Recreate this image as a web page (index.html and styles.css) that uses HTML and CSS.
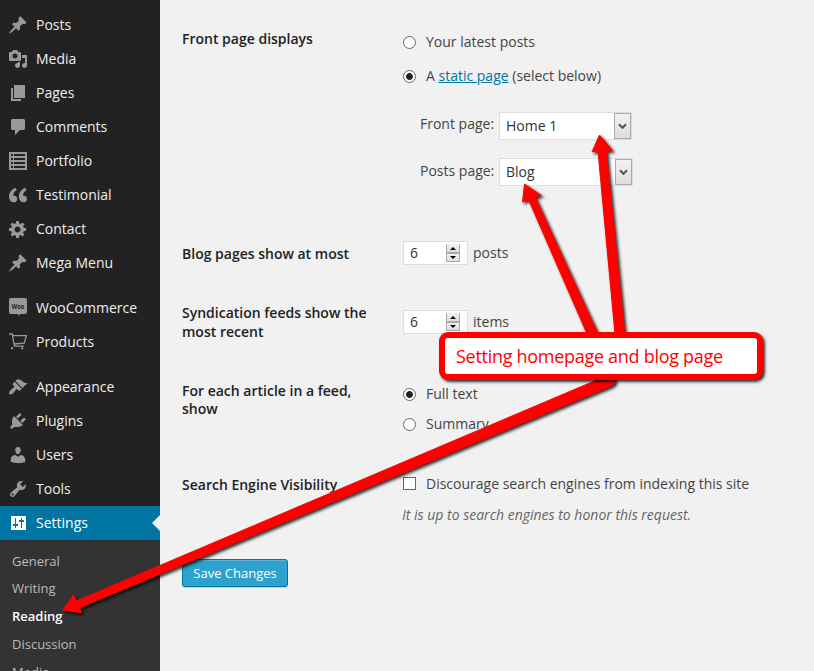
FILE: index.html
```html
<!DOCTYPE html>
<html lang="en">
<head>
<meta charset="utf-8">
<title>Reading Settings</title>
<link rel="stylesheet" href="styles.css">
</head>
<body>
<div class="app">
  <nav class="sidebar">
    <ul class="menu">
      <li class="item"><svg class="icon" viewBox="0 0 20 20"><path d="M10.44 3.02l1.82-1.82 6.36 6.35-1.83 1.82c-1.05-.68-2.48-.57-3.41.36l-.75.75c-.92.93-1.04 2.35-.35 3.41l-1.83 1.82-2.41-2.41-2.8 2.79c-.42.42-3.38 2.71-3.8 2.29s1.86-3.39 2.28-3.81l2.79-2.79L4.1 9.36l1.83-1.82c1.05.69 2.48.57 3.4-.36l.75-.75c.93-.92 1.05-2.35.36-3.41z"/></svg>Posts</li>
      <li class="item"><svg class="icon" viewBox="0 0 20 20"><path d="M13 11V4c0-.55-.45-1-1-1h-1.67L9 1H5L3.67 3H2c-.55 0-1 .45-1 1v7c0 .55.45 1 1 1h10c.55 0 1-.45 1-1zM7 4.5c1.38 0 2.5 1.12 2.5 2.5S8.38 9.5 7 9.5 4.5 8.38 4.5 7 5.62 4.5 7 4.5zM14 6h5v10.5c0 1.38-1.12 2.5-2.5 2.5S14 17.88 14 16.5s1.12-2.5 2.5-2.5c.17 0 .34.02.5.05V9h-3V6zm-4 8.05V13h2v3.5c0 1.38-1.12 2.5-2.5 2.5S7 17.88 7 16.5 8.12 14 9.5 14c.17 0 .34.02.5.05z"/></svg>Media</li>
      <li class="item"><svg class="icon" viewBox="0 0 20 20"><path d="M6 15V2h11v13H6zm-1 1h8v2H3V5h2v11z"/></svg>Pages</li>
      <li class="item"><svg class="icon" viewBox="0 0 20 20"><path d="M4.500 2h11c.8 0 1.500.7 1.500 1.500v8c0 .8-.7 1.500-1.500 1.500H12l-5 5v-5H4.500C3.700 13 3 12.300 3 11.500v-8C3 2.700 3.700 2 4.500 2z"/></svg>Comments</li>
      <li class="item"><svg class="icon" viewBox="0 0 20 20"><path fill-rule="evenodd" d="M1 1h18v18H1zM3 3v2h2V3zM6 3v2h11V3zM3 7v2h2V7zM6 7v2h11V7zM3 11v2h2v-2zM6 11v2h11v-2zM3 15v2h2v-2zM6 15v2h11v-2z"/></svg>Portfolio</li>
      <li class="item"><svg class="icon quote" viewBox="2 3 16.400 14"><path d="M9.490 13.220c0-.74-.2-1.380-.61-1.900-.62-.78-1.830-.88-2.530-.72-.29-1.650 1.110-3.750 2.920-4.650L7.880 4c-2.730 1.300-5.420 4.280-4.960 8.050C3.210 14.430 4.590 16 6.540 16c.85 0 1.560-.25 2.120-.75s.83-1.180.83-2.030zm8.050 0c0-.74-.2-1.380-.61-1.900-.63-.78-1.830-.88-2.530-.72-.29-1.650 1.110-3.750 2.920-4.650L15.930 4c-2.730 1.300-5.410 4.280-4.950 8.050.29 2.380 1.660 3.950 3.610 3.950.85 0 1.560-.25 2.120-.75s.83-1.180.83-2.030z"/></svg>Testimonial</li>
      <li class="item"><svg class="icon" viewBox="0 0 20 20"><path d="M18 12h-2.180c-.17.7-.44 1.350-.81 1.930l1.540 1.540-2.100 2.100-1.540-1.540c-.58.36-1.230.63-1.910.79V19H8v-2.180c-.68-.16-1.330-.43-1.910-.79l-1.540 1.540-2.120-2.120 1.540-1.540c-.36-.58-.63-1.230-.79-1.910H1V9.030h2.170c.16-.7.44-1.350.8-1.940L2.430 5.550l2.100-2.100 1.540 1.540c.58-.37 1.240-.64 1.930-.81V2h3v2.180c.68.160 1.330.43 1.910.79l1.540-1.540 2.120 2.120-1.540 1.540c.36.59.64 1.240.8 1.940H18V12zm-8.500 1.500c1.660 0 3-1.340 3-3s-1.340-3-3-3-3 1.340-3 3 1.340 3 3 3z"/></svg>Contact</li>
      <li class="item"><svg class="icon" viewBox="0 0 20 20"><path d="M10.44 3.02l1.82-1.82 6.36 6.35-1.83 1.82c-1.05-.68-2.48-.57-3.41.36l-.75.75c-.92.93-1.04 2.35-.35 3.41l-1.83 1.82-2.41-2.41-2.8 2.79c-.42.42-3.38 2.71-3.8 2.29s1.86-3.39 2.28-3.81l2.79-2.79L4.1 9.36l1.83-1.82c1.05.69 2.48.57 3.4-.36l.75-.75c.93-.92 1.05-2.35.36-3.41z"/></svg>Mega Menu</li>
    </ul>
    <ul class="menu">
      <li class="item"><svg class="icon" viewBox="0 0 20 20"><path d="M3 0h14a2 2 0 0 1 2 2v12a2 2 0 0 1-2 2h-5l-.7 1.700L9.500 16H3a2 2 0 0 1-2-2V2a2 2 0 0 1 2-2z"/><text class="woo" x="10" y="10.500" text-anchor="middle" textLength="13" lengthAdjust="spacingAndGlyphs">Woo</text></svg>WooCommerce</li>
      <li class="item"><svg class="icon line" viewBox="0 0 20 20"><path d="M1 2h3.200l2.300 12.500M4.700 3.600h13.700l-2.200 7.600L6.200 12M6.400 14.200h9.800"/><path class="solid" d="M3 15.300h2v2H3zM13.200 15.300h2v2h-2z"/></svg>Products</li>
    </ul>
    <ul class="menu">
      <li class="item"><svg class="icon" viewBox="0 0 20 20"><path d="M14.480 11.060L7.410 3.990l1.500-1.500c.5-.56 2.300-.47 3.510.32 1.210.8 1.430 1.280 2.910 2.100 1.180.64 2.450 1.260 4.450.85zm-.71.71L6.700 4.700 4.930 6.470c-.39.39-.39 1.020 0 1.410l1.060 1.060c.39.39.39 1.030 0 1.420-.6.6-1.430 1.110-2.210 1.690-.35.26-.7.53-1.010.84C1.430 14.230.4 16.080 1.400 17.070c.99 1 2.840-.03 4.180-1.360.31-.31.58-.66.85-1.020.57-.78 1.080-1.610 1.690-2.210.39-.39 1.020-.39 1.410 0l1.060 1.060c.39.39 1.020.39 1.410 0z"/></svg>Appearance</li>
      <li class="item"><svg class="icon" viewBox="0 0 20 20"><path d="M13.110 4.360L9.870 7.600 8 5.730l3.240-3.240c.35-.34 1.050-.2 1.560.32.52.51.66 1.210.31 1.550zm-8 1.770l.91-1.120 9.010 9.010-1.190.84c-.71.71-2.630 1.160-3.820 1.160H6.140L4.900 17.260c-.59.59-1.540.59-2.120 0-.59-.58-.59-1.530 0-2.120l1.240-1.240v-3.880c0-1.130.4-3.190 1.090-3.890zm7.260 3.970l3.240-3.240c.34-.35 1.040-.21 1.550.31.52.51.66 1.210.31 1.550l-3.240 3.250z"/></svg>Plugins</li>
      <li class="item"><svg class="icon" viewBox="0 0 20 20"><path d="M10 9.250c-2.270 0-2.730-3.440-2.730-3.440C7 4.020 7.820 2 9.970 2c2.160 0 2.980 2.020 2.710 3.810 0 0-.41 3.440-2.680 3.440zm0 2.570L12.720 10c2.390 0 4.520 2.330 4.520 4.530v2.490s-3.650 1.130-7.240 1.130c-3.650 0-7.240-1.130-7.240-1.130v-2.490c0-2.250 1.940-4.480 4.470-4.480z"/></svg>Users</li>
      <li class="item"><svg class="icon" viewBox="0 0 20 20"><path d="M16.680 9.770c-1.340 1.340-3.300 1.670-4.950.99l-5.410 6.520c-.99.99-2.590.99-3.580 0s-.99-2.590 0-3.570l6.520-5.420c-.68-1.650-.35-3.610.99-4.950 1.280-1.280 3.120-1.620 4.720-1.060l-2.890 2.890 2.820 2.820 2.860-2.870c.53 1.580.18 3.390-1.080 4.650zM3.810 16.210c.4.39 1.040.39 1.430 0 .4-.4.4-1.040 0-1.430-.39-.4-1.030-.4-1.430 0-.39.39-.39 1.030 0 1.430z"/></svg>Tools</li>
      <li class="item current"><svg class="icon" viewBox="0 0 20 20"><path fill-rule="evenodd" d="M3 3h15v14H3zM7 5v6H5v2h2v2h1v-2h2v-2H8V5zM13 5v2h-2v2h2v6h1V9h2V7h-2V5z"/></svg>Settings</li>
    </ul>
    <ul class="submenu">
      <li>General</li>
      <li>Writing</li>
      <li class="active">Reading</li>
      <li>Discussion</li>
      <li>Media</li>
    </ul>
  </nav>

  <main class="content">
    <section class="row front">
      <h2>Front page displays</h2>
      <div class="controls">
        <div class="option"><span class="radio"></span>Your latest posts</div>
        <div class="option"><span class="radio checked"></span><span>A <a href="#">static page</a> (select below)</span></div>
        <div class="picker"><span class="picker-label">Front page:</span><span class="select">Home 1<span class="drop"><svg viewBox="0 0 9 7"><path d="M1 1.200l3.500 3.600L8 1.200"/></svg></span></span></div>
        <div class="picker"><span class="picker-label">Posts page:</span><span class="select wide">Blog<span class="drop"><svg viewBox="0 0 9 7"><path d="M1 1.200l3.500 3.600L8 1.200"/></svg></span></span></div>
      </div>
    </section>
    <section class="row blog">
      <h2>Blog pages show at most</h2>
      <div class="controls count"><span class="number">6<span class="spin"><i class="up"></i><i class="down"></i></span></span>posts</div>
    </section>
    <section class="row feeds">
      <h2>Syndication feeds show the most recent</h2>
      <div class="controls count"><span class="number">6<span class="spin"><i class="up"></i><i class="down"></i></span></span>items</div>
    </section>
    <section class="row article">
      <h2>For each article in a feed, show</h2>
      <div class="controls">
        <div class="option"><span class="radio checked"></span>Full text</div>
        <div class="option"><span class="radio"></span>Summary</div>
      </div>
    </section>
    <section class="row search">
      <h2>Search Engine Visibility</h2>
      <div class="controls">
        <div class="option"><span class="checkbox"></span>Discourage search engines from indexing this site</div>
        <p class="note">It is up to search engines to honor this request.</p>
      </div>
    </section>
    <button class="save" type="button">Save Changes</button>
  </main>

  <svg class="arrows" viewBox="0 0 814 671">
    <path d="M524.500 184l17 11.500-6.500 1.200L599 336h-11L528.500 199.500l-6 2.500z"/>
    <path d="M599.500 135l13 15.500-6.300.2L625 336h-9.800L598 151.200l-6 .6z"/>
    <path d="M62.700 610L73.500 595l2.700 6L598 379.500l17-1v4q-1 2-4 3.500L79.500 607.800l2.200 5z"/>
  </svg>
  <div class="callout">Setting homepage and blog page</div>
</div>
</body>
</html>
```

FILE: styles.css
```css
* { box-sizing: border-box; }

body {
  margin: 0;
  background: #f1f1f1;
  color: #444;
  font: 14px/20px "Open Sans", "Noto Sans", sans-serif;
}

.app {
  position: relative;
  display: flex;
  height: 671px;
  overflow: hidden;
}

ul { margin: 0; padding: 0; list-style: none; }

/* Sidebar */
.sidebar {
  flex: 0 0 160px;
  padding-top: 8px;
  background: #222;
  color: #eee;
}
.menu + .menu { margin-top: 11px; }
.item {
  display: flex;
  align-items: center;
  gap: 8px;
  height: 34px;
  padding-left: 8px;
}
.icon { width: 20px; height: 20px; fill: #999; }
.icon.line { fill: none; stroke: #999; stroke-width: 1.3; }
.icon .solid { fill: #999; stroke: none; }
.woo { fill: #222; font: bold 7px "Open Sans", sans-serif; }
.current {
  position: relative;
  background: #0074a2;
  color: #fff;
}
.current .icon { fill: #fff; }
.current::after {
  content: "";
  position: absolute;
  right: 0;
  top: 9px;
  border: solid transparent;
  border-width: 8px 8px 8px 0;
  border-right-color: #f1f1f1;
}
.submenu {
  height: 131px;
  padding: 8px 0 0 12px;
  background: #333;
  color: #bbb;
  font-size: 13px;
  line-height: 28px;
}
.submenu li:first-child { height: 26px; line-height: 27px; }
.submenu .active { color: #fff; font-weight: 600; }

/* Settings form */
.content { flex: 1; padding: 30px 0 0 22px; }
.row { display: grid; grid-template-columns: 221px 1fr; }
.front { height: 215px; }
.blog { height: 59px; }
.feeds { height: 78px; }
.article { height: 94px; }
.search { height: 83px; }
h2 {
  width: 200px;
  margin: 0;
  color: #222;
  font-size: 14px;
  font-weight: 600;
  line-height: 18.2px;
}
.feeds h2 { margin-top: -1px; line-height: 19px; }
.option { display: flex; align-items: center; gap: 10px; height: 20px; }
.front .controls { padding-top: 2px; }
.front .option + .option { margin-top: 14px; }
.article .controls { padding-top: 2px; }
.article .option + .option { margin-top: 10px; }
.search .option { margin-top: -2px; }
a { color: #0074a2; }

.radio {
  width: 13px;
  height: 13px;
  border: 1px solid #666;
  border-radius: 50%;
  background: #fff;
}
.radio.checked { background: radial-gradient(circle, #222 3px, #fff 3.8px); }
.checkbox {
  width: 13px;
  height: 13px;
  margin-bottom: 2px;
  border: 1px solid #666;
  background: #fff;
}

.picker { display: flex; height: 28px; margin: 18px 0 0 17px; }
.option + .picker { margin-top: 26px; }
.picker-label { width: 79px; padding-top: 2px; }
.picker + .picker .picker-label { padding-top: 3px; }
.select {
  display: flex;
  align-items: center;
  justify-content: space-between;
  width: 133px;
  padding-left: 6px;
  border: 1px solid #ddd;
  background: #fff;
  color: #333;
}
.select.wide { width: 134px; }
.drop {
  display: grid;
  place-items: center;
  width: 17px;
  height: 26px;
  border: 1px solid #aaa;
  background: linear-gradient(#f2f2f2, #ddd);
}
.drop svg { width: 9px; height: 7px; fill: none; stroke: #555; stroke-width: 2; }

.count { display: flex; align-items: center; gap: 5px; height: 24px; margin-top: -4px; }
.feeds .count { margin-top: 6px; }
.number {
  display: flex;
  align-items: center;
  justify-content: space-between;
  width: 65px;
  height: 24px;
  padding: 0 7px 0 6px;
  border: 1px solid #ddd;
  background: #fff;
  color: #333;
}
.spin { display: grid; width: 14px; height: 18px; }
.spin i {
  display: grid;
  place-items: center;
  height: 9px;
  border: 1px solid #aaa;
  background: linear-gradient(#f0f0f0, #ddd);
}
.spin .up { border-top-color: #eee; }
.spin i::after { content: ""; border: 3px solid transparent; }
.spin .up::after { border-top: 0; border-bottom-color: #000; }
.spin .down::after { border-bottom: 0; border-top-color: #000; }

.note { margin: 11px 0 0 -1px; color: #666; font-style: italic; }

.save {
  display: block;
  width: 106px;
  height: 28px;
  padding: 0;
  border: 1px solid #0074a2;
  border-radius: 3px;
  background: #2ea2cc;
  box-shadow: inset 0 1px 0 rgba(120, 200, 230, .5), 0 1px 0 rgba(0, 0, 0, .15);
  color: #fff;
  font: 13px/26px "Open Sans", sans-serif;
}

/* Annotation layer */
.arrows {
  position: absolute;
  inset: 0;
  width: 814px;
  height: 671px;
  fill: #f00;
  stroke: #f00;
  stroke-width: 1;
  stroke-linejoin: round;
  filter: drop-shadow(2px 2px 1.5px rgba(0, 0, 0, .8));
}
.callout {
  position: absolute;
  left: 439px;
  top: 332px;
  width: 324px;
  height: 48px;
  padding-left: 11px;
  border: 6px solid #f00;
  border-radius: 9px;
  background: #fff;
  box-shadow: 2px 2px 3px rgba(0, 0, 0, .8);
  color: #f00;
  font-size: 18px;
  letter-spacing: -0.29px;
  line-height: 37px;
  white-space: nowrap;
}
```
